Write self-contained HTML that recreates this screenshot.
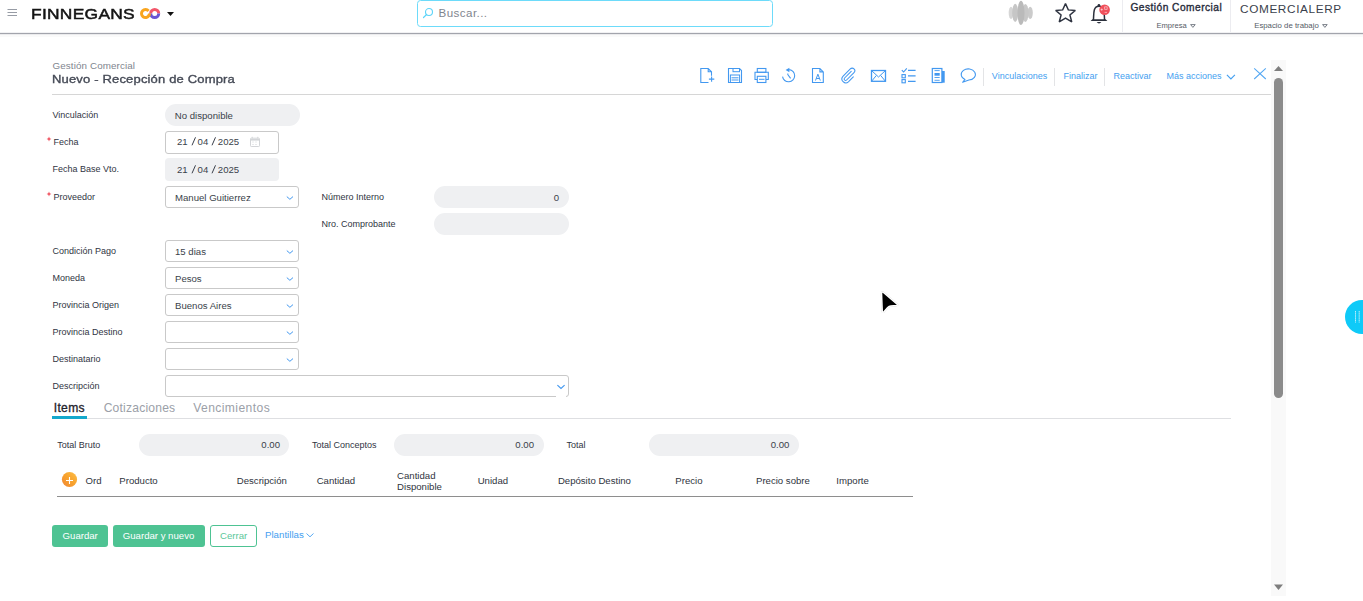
<!DOCTYPE html>
<html><head><meta charset="utf-8"><style>
html,body{margin:0;padding:0;}
body{width:1363px;height:601px;overflow:hidden;position:relative;background:#fff;font-family:"Liberation Sans",sans-serif;}
.t{position:absolute;white-space:nowrap;line-height:1;}
.r{position:absolute;box-sizing:content-box;}
</style></head><body>
<svg class="r" style="left:6px;top:8px;" width="13" height="9" viewBox="0 0 13 9"><rect x="1.5" y="1" width="9.5" height="1" fill="#979ca5"/><rect x="1.5" y="4" width="9.5" height="1" fill="#979ca5"/><rect x="1.5" y="7" width="9.5" height="1" fill="#979ca5"/></svg>
<div class="t " style="left:30.60px;top:6.46px;font-size:15.4px;color:#141414;letter-spacing:0.25px;-webkit-text-stroke:0.5px #141414;transform:scaleX(1.13);transform-origin:0 0;">FINNEGANS</div>
<svg class="r" style="left:138px;top:6px;" width="26" height="16" viewBox="0 0 26 16">
<path d="M10.57 4.93 A4 4 0 1 0 10.96 9.5" fill="none" stroke="#f9a51e" stroke-width="3"/>
<path d="M12.7 7.5 A4 4 0 0 1 20.7 7.5" fill="none" stroke="#f3566a" stroke-width="3"/>
<path d="M20.7 7.5 A4 4 0 0 1 12.7 7.5" fill="none" stroke="#6b55d3" stroke-width="3"/>
<path d="M11.5 7.5 A4 4 0 0 1 10.56 10.07" fill="none" stroke="#f9a51e" stroke-width="3"/>
</svg>
<svg class="r" style="left:166px;top:11px;" width="10" height="6" viewBox="0 0 10 6"><path d="M1 1 L8 1 L4.5 5 Z" fill="#111"/></svg>
<div class="r" style="left:417px;top:0px;width:354px;height:25px;border:1px solid #6ddbfa;border-radius:3.5px;background:#fff;"></div>
<svg class="r" style="left:422px;top:6px;" width="14" height="14" viewBox="0 0 14 14"><circle cx="7" cy="6" r="3.5" fill="none" stroke="#5dd4f8" stroke-width="1.1"/><path d="M4.6 8.5 L1.5 11.5" stroke="#5dd4f8" stroke-width="1.2" stroke-linecap="round"/></svg>
<div class="t " style="left:438.60px;top:6.68px;font-size:11.6px;color:#7f858e;letter-spacing:0.42px;">Buscar...</div>
<svg class="r" style="left:1004px;top:0px;" width="34" height="28" viewBox="0 0 34 28"><ellipse cx="7" cy="12.9" rx="2.3" ry="6.2" fill="#d6d6d6"/><ellipse cx="26.2" cy="12.9" rx="2.6" ry="6.1" fill="#cbcbcb"/><ellipse cx="11.2" cy="12.9" rx="3.0" ry="9.1" fill="#c6c6c6"/><ellipse cx="21.4" cy="12.9" rx="3.1" ry="9.0" fill="#c8c8c8"/><ellipse cx="17" cy="12.9" rx="3.5" ry="12.1" fill="#bababa"/></svg>
<svg class="r" style="left:1053px;top:1px;" width="25" height="24" viewBox="0 0 25 24"><path d="M12.5 2.6 L15.31 8.87 L22.33 9.41 L16.93 13.94 L18.76 20.96 L12.5 17.18 L6.24 20.96 L8.07 13.94 L2.67 9.41 L9.69 8.87 Z" fill="none" stroke="#2f3441" stroke-width="1.45" stroke-linejoin="miter" stroke-miterlimit="2"/></svg>
<svg class="r" style="left:1085px;top:0px;" width="30" height="28" viewBox="0 0 30 28"><path d="M8.4 20 C8.7 16.5 8.6 12.5 9.3 10 C10 7.4 11.8 6.2 14 6.2 C16.2 6.2 18 7.4 18.7 10 C19.4 12.5 19.3 16.5 19.6 20" fill="none" stroke="#2b303c" stroke-width="1.5"/><path d="M5.6 21 L7.4 19.3 H20.6 L22.4 21 Z" fill="#2b303c"/><circle cx="13.9" cy="5.3" r="1.3" fill="#2b303c"/><path d="M11.6 22 H16.4 Q14 24.8 11.6 22 Z" fill="#2b303c"/><circle cx="19.6" cy="9.8" r="5.3" fill="#f0505b"/><path d="M15.6 9.6 h2.2 M16.7 8.5 v2.2" stroke="#fff" stroke-width="0.7" opacity="0.8"/><path d="M19.6 6.8 h2.6 v2.6 h-2.6 Z M19.6 12.4 h2.4" fill="none" stroke="#fff" stroke-width="0.7" opacity="0.7"/></svg>
<div class="r" style="left:1122px;top:0px;width:1px;height:32px;background:#ececf0;"></div>
<div class="r" style="left:1230px;top:0px;width:1px;height:32px;background:#ececf0;"></div>
<div class="t " style="left:1130.40px;top:2.87px;font-size:10.2px;color:#262b3a;letter-spacing:0.47px;-webkit-text-stroke:0.35px #262b3a;">Gestión Comercial</div>
<div class="t " style="left:1156.40px;top:22.07px;font-size:7.6px;color:#555b66;">Empresa</div>
<svg class="r" style="left:1189px;top:23px;" width="8" height="6" viewBox="0 0 8 6"><path d="M1.6 1.6 L6.2 1.6 L3.9 4.4 Z" fill="none" stroke="#6a707a" stroke-width="0.9"/></svg>
<div class="t " style="left:1240.00px;top:3.51px;font-size:11.8px;color:#3a3f4c;letter-spacing:0.62px;">COMERCIALERP</div>
<div class="t " style="left:1254.20px;top:21.90px;font-size:7.8px;color:#555b66;">Espacio de trabajo</div>
<svg class="r" style="left:1321px;top:23px;" width="8" height="6" viewBox="0 0 8 6"><path d="M1.6 1.6 L6.2 1.6 L3.9 4.4 Z" fill="none" stroke="#6a707a" stroke-width="0.9"/></svg>
<div class="r" style="left:0px;top:32px;width:1363px;height:1px;background:#f1f1f3;"></div>
<div class="r" style="left:0px;top:33px;width:1363px;height:1px;background:#a2a4ac;"></div>
<div class="r" style="left:0px;top:34px;width:1363px;height:1px;background:#ebebed;"></div>
<div class="r" style="left:0px;top:35px;width:1363px;height:2px;background:#fafafa;"></div>
<div class="t " style="left:52.50px;top:61.20px;font-size:9.8px;color:#80858e;letter-spacing:0.12px;">Gestión Comercial</div>
<div class="t " style="left:51.80px;top:73.93px;font-size:11.3px;color:#454a56;letter-spacing:0.15px;-webkit-text-stroke:0.35px #454a56;transform:scaleX(1.15);transform-origin:0 0;">Nuevo - Recepción de Compra</div>
<div class="r" style="left:52px;top:94px;width:1219px;height:1px;background:#d6d6d6;"></div>
<svg class="r" style="left:699px;top:67px;" width="17" height="17" viewBox="0 0 17 17"><path d="M9.5 15.5 H1.8 V1.5 H9.2 L12.5 4.8 V8.8 M9.2 1.5 V4.8 H12.5" fill="none" stroke="#4298f0" stroke-width="1.1"/><path d="M12.6 9.5 V14.8 M9.9 12.1 H15.3" stroke="#4298f0" stroke-width="1.1"/></svg>
<svg class="r" style="left:727px;top:67px;" width="16" height="17" viewBox="0 0 16 17"><path d="M1.5 1.5 H12.5 L14.5 3.5 V15.5 H1.5 Z" fill="none" stroke="#4298f0" stroke-width="1.1"/><rect x="6" y="1.5" width="6.5" height="3.2" fill="none" stroke="#4298f0" stroke-width="1"/><rect x="3.4" y="8" width="9.2" height="7.5" fill="none" stroke="#4298f0" stroke-width="1"/><path d="M4.5 10.8 H11.5 M4.5 13 H11.5" stroke="#4298f0" stroke-width="1"/></svg>
<svg class="r" style="left:754px;top:67px;" width="16" height="17" viewBox="0 0 16 17"><rect x="3.3" y="1.5" width="8.6" height="3.8" fill="none" stroke="#4298f0" stroke-width="1.1"/><path d="M3.3 12.5 H1 V5.3 H14.3 V12.5 H12" fill="none" stroke="#4298f0" stroke-width="1.1"/><rect x="3.3" y="9.3" width="8.6" height="6.2" fill="none" stroke="#4298f0" stroke-width="1.1"/><path d="M5 12.3 H10.5" stroke="#4298f0" stroke-width="1"/></svg>
<svg class="r" style="left:781px;top:67px;" width="16" height="17" viewBox="0 0 16 17"><path d="M8.2 2.65 A6.1 6.1 0 1 1 1.55 9.6" fill="none" stroke="#4298f0" stroke-width="1.1"/><path d="M4.6 3 L8.4 0.8 L8.4 5.2 Z" fill="#4298f0"/><path d="M6.8 6.4 V7.6 L9.6 11.4" fill="none" stroke="#4298f0" stroke-width="1.05"/></svg>
<svg class="r" style="left:811px;top:67px;" width="15" height="17" viewBox="0 0 15 17"><path d="M1.5 1.5 H8.9 L12.3 4.9 V15.5 H1.5 Z M8.9 1.5 V4.9 H12.3" fill="none" stroke="#4298f0" stroke-width="1.1"/><path d="M4.5 13.5 L6.9 7.2 L9.3 13.5 M5.3 11.5 H8.5" fill="none" stroke="#4298f0" stroke-width="1"/></svg>
<svg class="r" style="left:840px;top:66px;" width="17" height="18" viewBox="0 0 17 18"><path d="M11.2 5.4 L4.6 12.0 A1.4 1.4 0 0 0 6.6 14.0 L14.0 6.6 A2.6 2.6 0 0 0 10.3 2.9 L2.9 10.3 A3.9 3.9 0 0 0 8.4 15.8 L13.3 10.9" fill="none" stroke="#4298f0" stroke-width="1.05" stroke-linecap="round"/></svg>
<svg class="r" style="left:870px;top:69px;" width="17" height="14" viewBox="0 0 17 14"><rect x="1.5" y="1.5" width="14" height="10.8" fill="none" stroke="#4298f0" stroke-width="1.3"/><path d="M1.8 1.8 L8.5 8 L15.2 1.8 M1.8 12 L6.3 6.5 M15.2 12 L10.7 6.5" fill="none" stroke="#4298f0" stroke-width="1"/></svg>
<svg class="r" style="left:900px;top:67px;" width="17" height="17" viewBox="0 0 17 17"><path d="M1.8 3.2 L3.6 5 L6.8 1.4" fill="none" stroke="#4298f0" stroke-width="1.1"/><rect x="2" y="7.6" width="3.3" height="3.2" fill="none" stroke="#4298f0" stroke-width="1.1"/><rect x="2" y="12.6" width="3.3" height="3.2" fill="none" stroke="#4298f0" stroke-width="1.1"/><path d="M8 3.4 H15.6 M8 8.9 H15.6 M8 14.4 H15.6" stroke="#4298f0" stroke-width="1.2"/></svg>
<svg class="r" style="left:930px;top:67px;" width="16" height="17" viewBox="0 0 16 17"><rect x="11" y="4" width="3.7" height="11.7" fill="#4298f0"/><rect x="2.3" y="1.5" width="9.6" height="14" fill="#fff" stroke="#4298f0" stroke-width="1.2"/><path d="M4.5 3.6 H9.7 M4.5 10.5 H9.7 M4.5 13.3 H9.7" stroke="#4298f0" stroke-width="0.9"/><rect x="4.5" y="6" width="5.2" height="2.7" fill="#4298f0"/></svg>
<svg class="r" style="left:959px;top:66.7px;" width="19" height="17" viewBox="0 0 19 17"><path d="M6 12.46 L3.6 15.3 L9.9 13.08 A7.1 5.6 0 1 0 6 12.46 Z" fill="none" stroke="#4298f0" stroke-width="1.05" stroke-linejoin="round"/></svg>
<div class="r" style="left:983px;top:68px;width:1px;height:18px;background:#e3e4e6;"></div>
<div class="r" style="left:1054px;top:68px;width:1px;height:18px;background:#e3e4e6;"></div>
<div class="r" style="left:1104px;top:68px;width:1px;height:18px;background:#e3e4e6;"></div>
<div class="t " style="left:991.80px;top:71.88px;font-size:9px;color:#45a0f0;">Vinculaciones</div>
<div class="t " style="left:1063.50px;top:71.88px;font-size:9px;color:#45a0f0;">Finalizar</div>
<div class="t " style="left:1113.50px;top:71.88px;font-size:9px;color:#45a0f0;">Reactivar</div>
<div class="t " style="left:1166.40px;top:71.88px;font-size:9px;color:#45a0f0;">Más acciones</div>
<svg class="r" style="left:1225px;top:72.8px;" width="12" height="8" viewBox="0 0 12 8"><path d="M1.9 1.9 L5.9 5.9 L9.9 1.9" fill="none" stroke="#45a0f0" stroke-width="1.15"/></svg>
<svg class="r" style="left:1252px;top:66px;" width="16" height="15" viewBox="0 0 16 15"><path d="M2.2 2.3 L13.8 13 M13.8 2.3 L2.2 13" stroke="#55a8f3" stroke-width="1.05"/></svg>
<div class="r" style="left:1271px;top:60px;width:15px;height:536px;background:#f9f9f9;"></div>
<svg class="r" style="left:1271px;top:62px;" width="15" height="12" viewBox="0 0 15 12"><path d="M3 9 L12 9 L7.5 4 Z" fill="#7e7e7e"/></svg>
<div class="r" style="left:1274px;top:78px;width:9px;height:320px;background:#8b8b8b;border-radius:4.5px;"></div>
<svg class="r" style="left:1271px;top:580.5px;" width="15" height="12" viewBox="0 0 15 12"><path d="M3 3.5 L12 3.5 L7.5 9 Z" fill="#7e7e7e"/></svg>
<div class="r" style="left:1345px;top:300px;width:34px;height:34px;background:#0fcaf8;border-radius:50%;"></div>
<svg class="r" style="left:1352px;top:309px;" width="10" height="16" viewBox="0 0 10 16"><path d="M3.5 2 V13.6 M7.2 2 V13.6" stroke="#c8f1fd" stroke-width="0.9" stroke-dasharray="1.6 0.5"/></svg>
<svg class="r" style="left:874px;top:285px;filter:drop-shadow(0 0.5px 0.6px rgba(0,0,0,0.25));" width="28" height="32" viewBox="0 0 28 32"><path d="M7.56 8.66 L8.22 26.26 Q8.44 28.02 9.76 26.92 L13.72 22.52 Q15.04 21.31 16.8 21.09 L22.74 20.54 Q24.17 20.21 23.18 19.22 L9.76 7.56 Q7.56 6.24 7.56 8.66 Z" fill="#000" stroke="#fff" stroke-width="1.5" stroke-linejoin="round"/></svg>
<div class="t " style="left:52.50px;top:110.88px;font-size:9px;color:#30343f;">Vinculación</div>
<div class="r" style="left:165px;top:104px;width:135px;height:22px;background:#eff0f2;border-radius:11.0px;"></div>
<div class="t " style="left:174.80px;top:111.37px;font-size:9.6px;color:#3a3f4a;">No disponible</div>
<svg class="r" style="left:46px;top:136px;" width="6" height="6" viewBox="0 0 6 6"><path d="M3 0.6 L3.7 2.3 L5.4 3 L3.7 3.7 L3 5.4 L2.3 3.7 L0.6 3 L2.3 2.3 Z" fill="#f04f5c"/></svg>
<div class="t " style="left:53.60px;top:137.88px;font-size:9px;color:#30343f;">Fecha</div>
<div class="r" style="left:165px;top:131px;width:112px;height:21px;background:#fff;border-radius:3px;border:1px solid #c9c9c9;"></div>
<div class="t " style="left:177.00px;top:137.37px;font-size:9.6px;color:#3a3f4a;">21</div>
<div class="t " style="left:197.60px;top:137.37px;font-size:9.6px;color:#3a3f4a;">04</div>
<div class="t " style="left:217.80px;top:137.37px;font-size:9.6px;color:#3a3f4a;">2025</div>
<svg class="r" style="left:191.0px;top:136px;" width="6" height="10" viewBox="0 0 6 10"><path d="M4.5 1.3 L1.0 9.3" stroke="#3a3f4a" stroke-width="1"/></svg>
<svg class="r" style="left:211.1px;top:136px;" width="6" height="10" viewBox="0 0 6 10"><path d="M4.5 1.3 L1.0 9.3" stroke="#3a3f4a" stroke-width="1"/></svg>
<svg class="r" style="left:249px;top:136px;" width="12" height="12" viewBox="0 0 12 12"><rect x="1.5" y="2.2" width="9" height="8.3" rx="0.8" fill="none" stroke="#d3d5d8" stroke-width="1"/><path d="M1.5 3.8 H10.5" stroke="#d3d5d8" stroke-width="1.6"/><path d="M3.5 6 h1 M6.5 6 h1 M3.5 8.5 h1 M6.5 8.5 h1" stroke="#d3d5d8" stroke-width="1"/><path d="M3.2 0.8 V2.5 M8.8 0.8 V2.5" stroke="#d3d5d8" stroke-width="1"/></svg>
<div class="t " style="left:52.50px;top:164.88px;font-size:9px;color:#30343f;">Fecha Base Vto.</div>
<div class="r" style="left:165px;top:158px;width:114px;height:23px;background:#eff0f2;border-radius:4px;"></div>
<div class="t " style="left:177.00px;top:165.37px;font-size:9.6px;color:#3a3f4a;">21</div>
<div class="t " style="left:197.60px;top:165.37px;font-size:9.6px;color:#3a3f4a;">04</div>
<div class="t " style="left:217.80px;top:165.37px;font-size:9.6px;color:#3a3f4a;">2025</div>
<svg class="r" style="left:191.0px;top:164px;" width="6" height="10" viewBox="0 0 6 10"><path d="M4.5 1.3 L1.0 9.3" stroke="#3a3f4a" stroke-width="1"/></svg>
<svg class="r" style="left:211.1px;top:164px;" width="6" height="10" viewBox="0 0 6 10"><path d="M4.5 1.3 L1.0 9.3" stroke="#3a3f4a" stroke-width="1"/></svg>
<svg class="r" style="left:46px;top:191px;" width="6" height="6" viewBox="0 0 6 6"><path d="M3 0.6 L3.7 2.3 L5.4 3 L3.7 3.7 L3 5.4 L2.3 3.7 L0.6 3 L2.3 2.3 Z" fill="#f04f5c"/></svg>
<div class="t " style="left:53.60px;top:192.88px;font-size:9px;color:#30343f;">Proveedor</div>
<div class="r" style="left:165px;top:186px;width:132px;height:20px;background:#fff;border-radius:3px;border:1px solid #c9c9c9;"></div>
<div class="t " style="left:175.00px;top:193.37px;font-size:9.6px;color:#3a3f4a;">Manuel Guitierrez</div>
<svg class="r" style="left:285.0px;top:195px;" width="10" height="6" viewBox="0 0 10 6"><path d="M1.8 1.6 L4.9 4.3 L8 1.6" fill="none" stroke="#4298f0" stroke-width="1"/></svg>
<div class="t " style="left:321.60px;top:192.88px;font-size:9px;color:#30343f;">Número Interno</div>
<div class="r" style="left:434px;top:186px;width:135px;height:22px;background:#eff0f2;border-radius:11.0px;"></div>
<div class="t" style="right:804.0px;top:193.37px;font-size:9.6px;color:#3a3f4a;">0</div>
<div class="t " style="left:321.60px;top:219.88px;font-size:9px;color:#30343f;">Nro. Comprobante</div>
<div class="r" style="left:434px;top:213px;width:135px;height:22px;background:#eff0f2;border-radius:11.0px;"></div>
<div class="t " style="left:52.50px;top:246.88px;font-size:9px;color:#30343f;">Condición Pago</div>
<div class="r" style="left:165px;top:240px;width:132px;height:20px;background:#fff;border-radius:3px;border:1px solid #c9c9c9;"></div>
<div class="t " style="left:175.00px;top:247.37px;font-size:9.6px;color:#3a3f4a;">15 dias</div>
<svg class="r" style="left:285.0px;top:249px;" width="10" height="6" viewBox="0 0 10 6"><path d="M1.8 1.6 L4.9 4.3 L8 1.6" fill="none" stroke="#4298f0" stroke-width="1"/></svg>
<div class="t " style="left:52.50px;top:273.88px;font-size:9px;color:#30343f;">Moneda</div>
<div class="r" style="left:165px;top:267px;width:132px;height:20px;background:#fff;border-radius:3px;border:1px solid #c9c9c9;"></div>
<div class="t " style="left:175.00px;top:274.37px;font-size:9.6px;color:#3a3f4a;">Pesos</div>
<svg class="r" style="left:285.0px;top:276px;" width="10" height="6" viewBox="0 0 10 6"><path d="M1.8 1.6 L4.9 4.3 L8 1.6" fill="none" stroke="#4298f0" stroke-width="1"/></svg>
<div class="t " style="left:52.50px;top:300.88px;font-size:9px;color:#30343f;">Provincia Origen</div>
<div class="r" style="left:165px;top:294px;width:132px;height:20px;background:#fff;border-radius:3px;border:1px solid #c9c9c9;"></div>
<div class="t " style="left:175.00px;top:301.37px;font-size:9.6px;color:#3a3f4a;">Buenos Aires</div>
<svg class="r" style="left:285.0px;top:303px;" width="10" height="6" viewBox="0 0 10 6"><path d="M1.8 1.6 L4.9 4.3 L8 1.6" fill="none" stroke="#4298f0" stroke-width="1"/></svg>
<div class="t " style="left:52.50px;top:327.88px;font-size:9px;color:#30343f;">Provincia Destino</div>
<div class="r" style="left:165px;top:321px;width:132px;height:20px;background:#fff;border-radius:3px;border:1px solid #c9c9c9;"></div>
<svg class="r" style="left:285.0px;top:330px;" width="10" height="6" viewBox="0 0 10 6"><path d="M1.8 1.6 L4.9 4.3 L8 1.6" fill="none" stroke="#4298f0" stroke-width="1"/></svg>
<div class="t " style="left:52.50px;top:354.88px;font-size:9px;color:#30343f;">Destinatario</div>
<div class="r" style="left:165px;top:348px;width:132px;height:20px;background:#fff;border-radius:3px;border:1px solid #c9c9c9;"></div>
<svg class="r" style="left:285.0px;top:357px;" width="10" height="6" viewBox="0 0 10 6"><path d="M1.8 1.6 L4.9 4.3 L8 1.6" fill="none" stroke="#4298f0" stroke-width="1"/></svg>
<div class="t " style="left:52.50px;top:381.88px;font-size:9px;color:#30343f;">Descripción</div>
<div class="r" style="left:165px;top:375px;width:402px;height:20px;background:#fff;border-radius:3px;border:1px solid #c9c9c9;"></div>
<div class="r" style="left:556px;top:396px;width:10px;height:1px;background:#fff;"></div>
<svg class="r" style="left:556px;top:383px;" width="10" height="7" viewBox="0 0 10 7"><path d="M1.4 2.2 L5 5.5 L8.6 2.2" fill="none" stroke="#4298f0" stroke-width="1.15"/></svg>
<div class="t " style="left:53.80px;top:402.26px;font-size:12.1px;color:#1f232c;letter-spacing:0.3px;-webkit-text-stroke:0.3px #1f232c;">Items</div>
<div class="t " style="left:103.70px;top:402.26px;font-size:12.1px;color:#9ba0a8;letter-spacing:0.2px;">Cotizaciones</div>
<div class="t " style="left:193.20px;top:402.26px;font-size:12.1px;color:#9ba0a8;letter-spacing:0.42px;">Vencimientos</div>
<div class="r" style="left:52px;top:418px;width:1179px;height:1px;background:#dedfe2;"></div>
<div class="r" style="left:52px;top:416px;width:35px;height:3px;background:#14a8cc;"></div>
<div class="t " style="left:57.20px;top:440.88px;font-size:9px;color:#30343f;">Total Bruto</div>
<div class="r" style="left:139px;top:434px;width:150px;height:22px;background:#eff0f2;border-radius:11.0px;"></div>
<div class="t" style="right:1083.0px;top:440.37px;font-size:9.6px;color:#3a3f4a;">0.00</div>
<div class="t " style="left:312.00px;top:440.88px;font-size:9px;color:#30343f;">Total Conceptos</div>
<div class="r" style="left:394px;top:434px;width:150px;height:22px;background:#eff0f2;border-radius:11.0px;"></div>
<div class="t" style="right:829.0px;top:440.37px;font-size:9.6px;color:#3a3f4a;">0.00</div>
<div class="t " style="left:566.60px;top:440.88px;font-size:9px;color:#30343f;">Total</div>
<div class="r" style="left:649px;top:434px;width:150px;height:22px;background:#eff0f2;border-radius:11.0px;"></div>
<div class="t" style="right:573.7px;top:440.37px;font-size:9.6px;color:#3a3f4a;">0.00</div>
<svg class="r" style="left:61px;top:471px;" width="17" height="17" viewBox="0 0 17 17"><defs><linearGradient id="og" x1="1" y1="0" x2="0" y2="1"><stop offset="0" stop-color="#fcc04a"/><stop offset="0.5" stop-color="#f8a22c"/><stop offset="1" stop-color="#ef8638"/></linearGradient></defs><circle cx="8.5" cy="8.5" r="7.6" fill="url(#og)"/><path d="M8.5 6 V13 M5 9.5 H12" stroke="#fff" stroke-width="1.1"/></svg>
<div class="t " style="left:85.60px;top:476.37px;font-size:9.6px;color:#2f3440;">Ord</div>
<div class="t " style="left:119.30px;top:476.37px;font-size:9.6px;color:#2f3440;">Producto</div>
<div class="t " style="left:236.80px;top:476.37px;font-size:9.6px;color:#2f3440;">Descripción</div>
<div class="t " style="left:316.70px;top:476.37px;font-size:9.6px;color:#2f3440;">Cantidad</div>
<div class="t " style="left:477.70px;top:476.37px;font-size:9.6px;color:#2f3440;">Unidad</div>
<div class="t " style="left:557.90px;top:476.37px;font-size:9.6px;color:#2f3440;">Depósito Destino</div>
<div class="t " style="left:675.30px;top:476.37px;font-size:9.6px;color:#2f3440;">Precio</div>
<div class="t " style="left:756.00px;top:476.37px;font-size:9.6px;color:#2f3440;">Precio sobre</div>
<div class="t " style="left:836.30px;top:476.37px;font-size:9.6px;color:#2f3440;">Importe</div>
<div class="t " style="left:397.10px;top:471.37px;font-size:9.6px;color:#2f3440;">Cantidad</div>
<div class="t " style="left:397.10px;top:482.37px;font-size:9.6px;color:#2f3440;">Disponible</div>
<div class="r" style="left:57px;top:496px;width:856px;height:1px;background:#8e8e8e;"></div>
<div class="r" style="left:52px;top:525px;width:56px;height:22px;background:#4ec393;border-radius:3px;"></div>
<div class="t " style="left:62.60px;top:531.37px;font-size:9.6px;color:#fff;">Guardar</div>
<div class="r" style="left:113px;top:525px;width:92px;height:22px;background:#4ec393;border-radius:3px;"></div>
<div class="t " style="left:122.80px;top:531.37px;font-size:9.6px;color:#fff;">Guardar y nuevo</div>
<div class="r" style="left:210px;top:525px;width:45px;height:20px;border:1px solid #4ec393;border-radius:3px;background:#fff;"></div>
<div class="t " style="left:220.00px;top:531.37px;font-size:9.6px;color:#5cc79a;">Cerrar</div>
<div class="t " style="left:265.00px;top:530.29px;font-size:9.7px;color:#45a0f0;">Plantillas</div>
<svg class="r" style="left:305px;top:532px;" width="11" height="7" viewBox="0 0 11 7"><path d="M1.5 1.5 L5 4.8 L8.5 1.5" fill="none" stroke="#45a0f0" stroke-width="0.9"/></svg>
</body></html>
